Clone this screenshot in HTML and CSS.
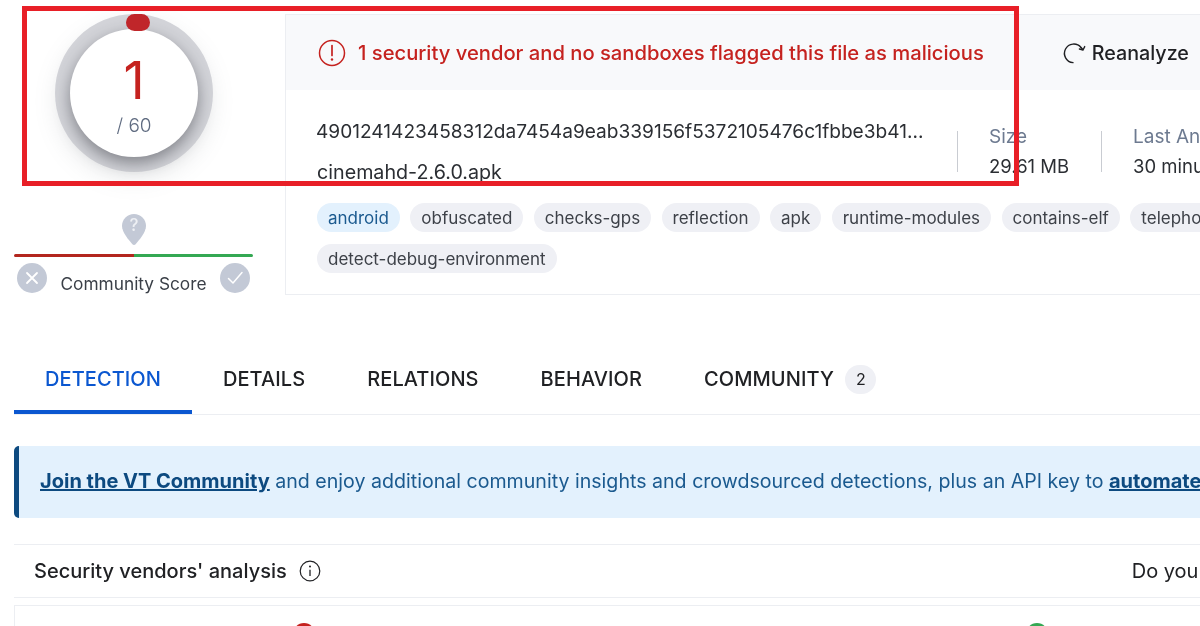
FILE: index.html
```html
<!DOCTYPE html>
<html lang="en">
<head>
<meta charset="utf-8">
<title>VirusTotal - File</title>
<link rel="stylesheet" href="styles.css">
</head>
<body>
<div class="page">
  <section class="summary">
    <aside class="score">
      <div class="gauge">
        <div class="gauge-face">
          <span class="gauge-num">1</span>
          <span class="gauge-total">/ 60</span>
        </div>
        <span class="gauge-pill"></span>
      </div>
      <div class="community">
        <svg class="pin" viewBox="0 0 24 31" width="24" height="31"><path d="M12 0C5.4 0 0 5.2 0 11.8c0 6.6 7 14.6 10.4 18.4.9 1 2.300 1 3.200 0C17 26.400 24 18.400 24 11.800 24 5.200 18.600 0 12 0z" fill="#c3c9d6"/><text x="12" y="17" class="pin-q">?</text></svg>
        <div class="score-bar"><span class="bar-red"></span><span class="bar-green"></span></div>
        <div class="score-row">
          <span class="vote"><svg viewBox="0 0 30 30" width="30" height="30"><path d="M10 10l10 10M20 10L10 20" stroke="#fff" stroke-width="1.800" fill="none" stroke-linecap="round"/></svg></span>
          <span class="score-label">Community Score</span>
          <span class="vote"><svg viewBox="0 0 30 30" width="30" height="30"><path d="M8.500 15.500l4.500 4.500 9-10.500" stroke="#fff" stroke-width="1.500" fill="none" stroke-linecap="round" stroke-linejoin="round"/></svg></span>
        </div>
      </div>
    </aside>
    <div class="card">
      <header class="card-head">
        <svg class="alert-icon" viewBox="0 0 28 28" width="28" height="28"><circle cx="14" cy="14" r="12.500" fill="none" stroke="#c5221f" stroke-width="1.500"/><path d="M14 6.500v10" stroke="#c5221f" stroke-width="1.700" stroke-linecap="round"/><circle cx="14" cy="20.500" r="1.200" fill="#c5221f"/></svg>
        <span class="alert-text">1 security vendor and no sandboxes flagged this file as malicious</span>
        <span class="reanalyze">
          <svg viewBox="0 0 24 24" width="24" height="24"><path d="M19 6.500A9.300 9.300 0 1 0 11 21.600" fill="none" stroke="#202124" stroke-width="1.400" stroke-linecap="round"/><path d="M19 6.500c1 .8 1.600 1.600 2 2.500M21 9l1.700-3.400M21 9l-3.600-1" fill="none" stroke="#202124" stroke-width="1.400" stroke-linecap="round" stroke-linejoin="round"/></svg>
          <span>Reanalyze</span>
        </span>
      </header>
      <div class="card-body">
        <div class="file-row">
          <div class="file-names">
            <div class="file-hash">4901241423458312da7454a9eab339156f5372105476c1fbbe3b41...</div>
            <div class="file-name">cinemahd-2.6.0.apk</div>
          </div>
          <div class="stat stat-size"><span class="stat-label">Size</span><span class="stat-value">29.61 MB</span></div>
          <div class="stat"><span class="stat-label">Last Analysis Date</span><span class="stat-value">30 minutes ago</span></div>
        </div>
        <div class="chips">
          <span class="chip chip-blue">android</span>
          <span class="chip">obfuscated</span>
          <span class="chip">checks-gps</span>
          <span class="chip">reflection</span>
          <span class="chip">apk</span>
          <span class="chip">runtime-modules</span>
          <span class="chip">contains-elf</span>
          <span class="chip">telephony</span>
          <span class="chip">detect-debug-environment</span>
        </div>
      </div>
    </div>
  </section>

  <nav class="tabs">
    <a class="tab tab-active">DETECTION</a>
    <a class="tab">DETAILS</a>
    <a class="tab">RELATIONS</a>
    <a class="tab">BEHAVIOR</a>
    <a class="tab">COMMUNITY <span class="tab-badge">2</span></a>
  </nav>

  <div class="banner"><a class="banner-link">Join the VT Community</a> and enjoy additional community insights and crowdsourced detections, plus an API key to <a class="banner-link">automate checks.</a></div>

  <div class="analysis-head">
    <span class="analysis-title">Security vendors' analysis</span>
    <svg class="info-icon" viewBox="0 0 22 22" width="22" height="22"><circle cx="11" cy="11" r="9.800" fill="none" stroke="#202124" stroke-width="1.200"/><path d="M11 9.800v6.200" stroke="#202124" stroke-width="1.300"/><circle cx="11" cy="6.600" r="1" fill="#202124"/></svg>
    <span class="analysis-ask">Do you want to automate checks?</span>
  </div>

  <div class="vendors">
    <span class="dot dot-red"></span>
    <span class="dot dot-green"></span>
  </div>
</div>
<div class="highlight"></div>
</body>
</html>
```

FILE: styles.css
```css
* { box-sizing: border-box; }
html, body { margin: 0; height: 626px; overflow: hidden; background: #fff; }
body { font-family: Inter, Roboto, sans-serif; color: #2b2e33; position: relative; width: 1200px; }

.page { width: 1500px; padding: 14px 0 0 14px; filter: blur(.3px); }

.summary { display: flex; height: 281px; }
.score { width: 271px; flex: none; }
.gauge {
  position: relative; width: 158px; height: 158px; margin-left: 41px; border-radius: 50%;
  background: #d3d4d9;
  box-shadow: 0 8px 22px rgba(120,125,135,.14);
  display: flex; align-items: center; justify-content: center;
}
.gauge-face {
  width: 128px; height: 128px; border-radius: 50%; background: #fff;
  box-shadow: 0 6px 16px rgba(50,52,60,.5);
  display: flex; flex-direction: column; align-items: center;
}
.gauge-num { font-size: 52px; line-height: 54px; color: #c5221f; margin-top: 25px; font-weight: 400; }
.gauge-total { font-size: 19px; line-height: 24px; color: #5f6b80; margin-top: 6px; font-weight: 300; }
.gauge-pill { position: absolute; left: 71px; top: 0; width: 24px; height: 17px; border-radius: 9px; background: #c0262a; }

.community { display: flex; flex-direction: column; align-items: stretch; width: 239px; margin-top: 42px; }
.pin { align-self: center; }
.pin-q { font: 500 17px Inter, sans-serif; fill: #eef0f4; text-anchor: middle; }
.score-bar { display: flex; height: 3px; margin-top: 9px; border-radius: 2px; overflow: hidden; }
.bar-red { flex: 1; background: #b3261e; }
.bar-green { flex: 1; background: #34a853; }
.score-row { display: flex; justify-content: space-between; align-items: flex-start; padding: 6px 3px 0; }
.vote { width: 30px; height: 30px; border-radius: 50%; background: #c3c9d6; display: block; }
.vote svg { display: block; }
.score-label { font-size: 17.300px; line-height: 24px; margin-top: 9px; color: #3a3f47; white-space: nowrap; }

.card { flex: none; width: 1100px; height: 281px; border: 1px solid #eceef2; border-right: 0; }
.card-head { height: 75px; background: #f8f9fb; display: flex; align-items: center; padding-left: 32px; }
.alert-icon { flex: none; }
.alert-text { font-size: 20.200px; font-weight: 500; color: #c5221f; margin-left: 12px; white-space: nowrap; }
.reanalyze { display: flex; align-items: center; gap: 6px; margin-left: 78px; font-size: 19.700px; font-weight: 500; color: #202124; white-space: nowrap; }
.card-body { padding: 0 0 0 31px; }
.file-row { display: flex; height: 113px; }
.file-names { width: 641px; flex: none; margin-left: -1px; padding-top: 26px; }
.file-hash { font-size: 19.100px; line-height: 30px; height: 30px; color: #2b2e33; white-space: nowrap; }
.file-name { font-size: 19.700px; line-height: 30px; margin-top: 11px; margin-left: 1px; color: #2b2e33; }
.stat { display: flex; flex-direction: column; border-left: 1px solid #c9ccd2; height: 41px; margin-top: 41px; padding-left: 31px; white-space: nowrap; }
.stat-size { width: 144px; }
.stat-label { font-size: 19px; line-height: 24px; color: #6d7a90; margin-top: -6px; }
.stat-value { font-size: 18.500px; line-height: 24px; color: #2b2e33; margin-top: 5px; }
.chips { display: flex; flex-wrap: wrap; gap: 11.500px 10.450px; width: 950px; }
.chip { height: 29px; line-height: 30px; padding: 0 11px; border-radius: 15px; background: #eff0f5; font-size: 17px; color: #3d4148; white-space: nowrap; }
.chip-blue { background: #e3f1fd; color: #1b5a8f; }

.tabs { display: flex; height: 85px; margin-top: 35px; border-bottom: 1px solid #eceef2; align-items: stretch; }
.tab { padding: 34px 31px 0; font-size: 20px; letter-spacing: .08px; font-weight: 500; line-height: 30px; color: #202124; white-space: nowrap; display: block; }
.tab-active { color: #0b57d0; border-bottom: 4px solid #0b57d0; height: 84px; }
.tab-badge { display: inline-block; width: 31px; height: 29px; line-height: 29px; border-radius: 15px; background: #eff0f5; text-align: center; font-size: 16px; font-weight: 400; margin-left: 6px; vertical-align: 1px; }

.banner { margin-top: 31px; height: 72px; background: #e3f1fd; border-left: 5px solid #0d4a80; border-radius: 5px 0 0 5px; padding-left: 21px; font-size: 19.600px; line-height: 70px; color: #1b5a8f; white-space: nowrap; }
.banner-link { font-size: 20px; font-weight: 700; color: #0d4a80; text-decoration: underline; }

.analysis-head { display: flex; align-items: center; margin-top: 26px; height: 54px; border-top: 1px solid #eceef2; border-bottom: 1px solid #eceef2; padding-left: 20px; }
.analysis-title { font-size: 20px; font-weight: 500; color: #202124; white-space: nowrap; }
.info-icon { margin-left: 12px; flex: none; }
.analysis-ask { margin-left: 811px; font-size: 20px; color: #202124; white-space: nowrap; }

.vendors { position: relative; margin-top: 7px; height: 40px; border: 1px solid #eceef2; border-bottom: 0; }
.dot { position: absolute; top: 17px; width: 22px; height: 22px; border-radius: 50%; }
.dot-red { left: 278px; background: #c5221f; }
.dot-green { left: 1011px; background: #34a853; }

.highlight { position: absolute; left: 22px; top: 6px; width: 997px; height: 180px; border: 5px solid #e81f27; pointer-events: none; }
```
